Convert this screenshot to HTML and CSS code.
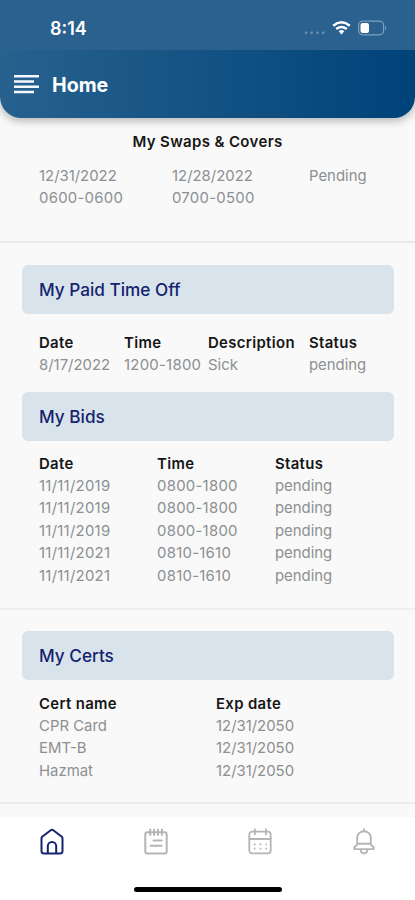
FILE: index.html
```html
<!DOCTYPE html>
<html lang="en">
<head>
<meta charset="utf-8">
<meta name="viewport" content="width=device-width, initial-scale=1">
<title>Home</title>
<link rel="stylesheet" href="styles.css">
</head>
<body>
<div class="app">
  <header class="header">
    <div class="statusbar">
      <span class="clock">8:14</span>
      <svg class="indicators" width="86" height="20" viewBox="0 0 86 20">
        <g fill="#6890b2"><circle cx="4" cy="14.8" r="1.4"/><circle cx="9.6" cy="14.8" r="1.4"/><circle cx="15.4" cy="14.8" r="1.4"/><circle cx="21.2" cy="14.8" r="1.4"/></g>
        <g fill="none" stroke="#fff" stroke-width="2.4"><path d="M31.2 7.7Q39.5 0.9 47.8 7.7"/><path d="M34.2 11Q39.5 6.9 44.8 11"/></g>
        <path d="M36.7 13.2Q39.5 11 42.3 13.2L39.5 16.4Z" fill="#fff"/>
        <rect x="56.6" y="3.2" width="25" height="13.6" rx="4.2" fill="none" stroke="#7fa0bc" stroke-width="1.2"/>
        <path d="M83.2 7.8q2.4 2.2 0 4.8z" fill="#7fa0bc"/>
        <rect x="58.5" y="5" width="8.5" height="10" rx="2" fill="#fff"/>
      </svg>
    </div>
    <div class="titlebar">
      <svg class="menu" width="25" height="19" viewBox="0 0 25 19" fill="#f5f8ff"><path d="M0 0h25v2.5H0zM0 5.3h20v2.5H0zM0 10.5h25V13H0zM0 15.8h20v2.5H0z"/></svg>
      <h1>Home</h1>
    </div>
  </header>

  <main class="content">
    <section class="swaps">
      <h2 class="caption">My Swaps &amp; Covers</h2>
      <div class="table cols-swaps">
        <span>12/31/2022</span><span>12/28/2022</span><span>Pending</span>
        <span class="hours">0600-0600</span><span class="hours">0700-0500</span><span></span>
      </div>
    </section>
    <section class="requests">
      <h2 class="banner">My Paid Time Off</h2>
      <div class="table cols-pto">
        <b>Date</b><b>Time</b><b>Description</b><b>Status</b>
        <span>8/17/2022</span><span class="hours">1200-1800</span><span>Sick</span><span>pending</span>
      </div>
      <h2 class="banner">My Bids</h2>
      <div class="table cols-bids">
        <b>Date</b><b>Time</b><b>Status</b>
        <span class="hours">11/11/2019</span><span class="hours">0800-1800</span><span>pending</span>
        <span class="hours">11/11/2019</span><span class="hours">0800-1800</span><span>pending</span>
        <span class="hours">11/11/2019</span><span class="hours">0800-1800</span><span>pending</span>
        <span class="hours">11/11/2021</span><span class="hours">0810-1610</span><span>pending</span>
        <span class="hours">11/11/2021</span><span class="hours">0810-1610</span><span>pending</span>
      </div>
    </section>
    <section class="certs">
      <h2 class="banner">My Certs</h2>
      <div class="table cols-certs">
        <b>Cert name</b><b>Exp date</b>
        <span>CPR Card</span><span>12/31/2050</span>
        <span>EMT-B</span><span>12/31/2050</span>
        <span>Hazmat</span><span>12/31/2050</span>
      </div>
    </section>
  </main>

  <footer class="footer">
    <nav class="tabs">
      <svg class="active" viewBox="0 0 26 28" stroke-width="2"><path d="M2.5 10.4Q2.5 9.5 3.2 8.8L11.7 2.2Q13 1.3 14.3 2.2L22.8 8.8Q23.5 9.5 23.5 10.4V23Q23.5 25.5 21 25.5H5Q2.5 25.5 2.5 23Z"/><path d="M8.8 25V18.2a4.2 4.2 0 0 1 8.4 0V25"/></svg>
      <svg viewBox="0 0 26 28" stroke-width="2"><rect x="2.3" y="4.2" width="21.4" height="21.2" rx="2"/><path d="M7.2 1.5v5.4M11.1 1.5v5.4M15 1.5v5.4M18.9 1.5v5.4M10.5 12.6h8.2M7.5 17.8h11.2"/></svg>
      <svg viewBox="0 0 26 28" stroke-width="1.8"><rect x="2.3" y="3.6" width="21.4" height="21.8" rx="2.8"/><path d="M2.3 11h21.4M7.8 1.2v5.2M18.9 1.2v5.2"/><path stroke-dasharray="1.7 4.1" stroke-width="1.7" stroke-linecap="butt" d="M6.8 16.3H20M6.8 20.7H20"/></svg>
      <svg viewBox="0 0 26 28" stroke-width="1.9"><path d="M13 1.2v2M6.2 15.8V9.7a6.8 6.4 0 0 1 13.6 0v6.1M6.2 15.8h13.6M6.2 15.8q-.3 1.7-2 2.6-1.5.9-.9 2.7h19.4q.6-1.8-.9-2.7-1.7-.9-2-2.6M9.7 21.5q0 3.8 3.3 3.8t3.3-3.8"/></svg>
    </nav>
    <div class="home-indicator"></div>
  </footer>
</div>
</body>
</html>
```
FILE: styles.css
```css
* { box-sizing: border-box; }
body { margin: 0; font-family: Inter, "Liberation Sans", sans-serif; }
h1, h2 { margin: 0; }

.app {
  width: 415px;
  height: 900px;
  display: flex;
  flex-direction: column;
  background: #f9f9f9;
  overflow: hidden;
}

.header {
  height: 118px;
  flex: none;
  border-radius: 0 0 21px 21px;
  background: linear-gradient(90deg, #27618e, #004379);
  box-shadow: 0 3px 9px rgba(0, 0, 0, .28);
  overflow: hidden;
}
.statusbar {
  height: 50px;
  padding: 18px 27px 0 50px;
  display: flex;
  justify-content: space-between;
  background: #2a618f;
  color: #fff;
}
.clock { font-size: 18px; line-height: 21px; font-weight: 600; }
.titlebar {
  height: 68px;
  padding: 1px 0 0 14px;
  display: flex;
  align-items: center;
  gap: 13px;
  color: #fff;
}
h1 { font-size: 19.6px; font-weight: 700; line-height: 24px; }

.content { flex: none; height: 699px; }
.swaps { height: 125px; padding-top: 13px; border-bottom: 2px solid #e9e9e9; }
.requests { height: 367px; padding-top: 22px; border-bottom: 2px solid #efefef; }
.certs { height: 194px; padding-top: 21px; border-bottom: 2px solid #ececec; }

.caption {
  font-size: 15px;
  font-weight: 600;
  line-height: 22px;
  letter-spacing: .36px;
  text-align: center;
  color: #161616;
}
.banner {
  height: 49px;
  margin: 0 21px 0 22px;
  padding-left: 17px;
  border-radius: 6px;
  background: #d9e3eb;
  color: #14246e;
  font-size: 17.2px;
  font-weight: 500;
  line-height: 49px;
}
.table {
  display: grid;
  grid-auto-rows: 22.4px;
  padding-left: 39px;
  font-size: 14.9px;
  line-height: 22.4px;
  color: #8c9092;
  white-space: nowrap;
}
.table b { font-weight: 600; letter-spacing: .35px; color: #161616; }
.table .hours { letter-spacing: .27px; }
.cols-swaps { grid-template-columns: 133px 137px 1fr; margin-top: 12px; }
.cols-pto { grid-template-columns: 85px 84px 101px 1fr; padding-top: 17.6px; height: 78px; }
.cols-bids { grid-template-columns: 118px 118px 1fr; padding-top: 11.6px; }
.cols-certs { grid-template-columns: 177px 1fr; padding-top: 12.6px; }

.footer { flex: 1; background: #fff; }
.tabs {
  height: 69px;
  padding: 11px 38px 0 39px;
  display: flex;
  justify-content: space-between;
}
.tabs svg {
  width: 26px;
  height: 28px;
  fill: none;
  stroke: #b5b5b5;
  stroke-linecap: round;
  stroke-linejoin: round;
}
.tabs .active { stroke: #14246e; }
.home-indicator {
  width: 148px;
  height: 5px;
  margin: 1px auto 0;
  border-radius: 3px;
  background: #000;
}
```
